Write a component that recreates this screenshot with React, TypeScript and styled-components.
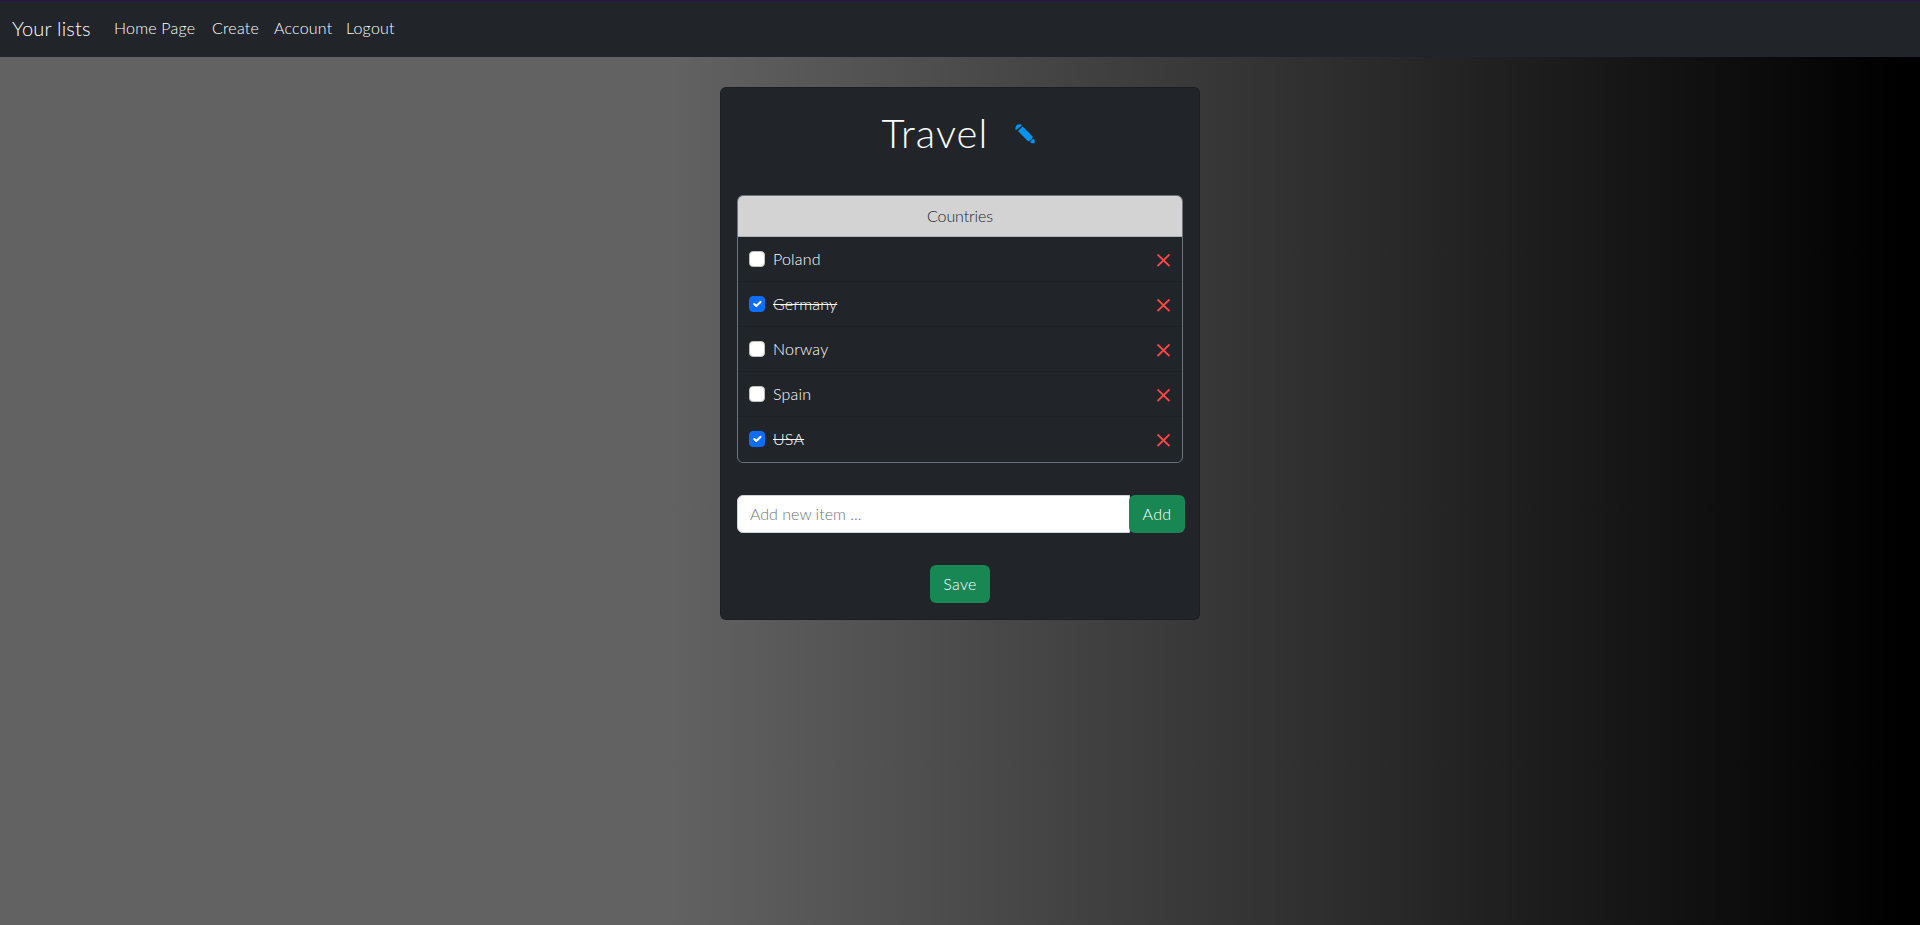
import React, { useState } from 'react';
import styled, { createGlobalStyle, css } from 'styled-components';

const GlobalStyle = createGlobalStyle`
  *, *::before, *::after { box-sizing: border-box; }
  body {
    margin: 0;
    font-family: Lato, sans-serif;
    font-size: 16px;
    font-weight: 300;
    line-height: 24px;
    letter-spacing: 0.2px;
    color: #fff;
  }
`;

const Page = styled.div`
  display: flex;
  flex-direction: column;
  min-height: 100vh;
  background: linear-gradient(to right, #626262 35%, #000 99%);
`;

const Navbar = styled.nav`
  display: flex;
  align-items: center;
  height: 57px;
  padding: 0 12px;
  border-top: 1px solid #2b1055;
  background: #212529;
`;

const Brand = styled.a`
  width: 78px;
  margin-right: 16px;
  padding-bottom: 2px;
  font-size: 20px;
  line-height: 30px;
  white-space: nowrap;
`;

const NavLink = styled.a<{ $width: number }>`
  width: ${(p) => p.$width + 16}px;
  padding: 7px 8px 9px;
  white-space: nowrap;
`;

const Card = styled.main`
  display: flex;
  flex-direction: column;
  align-items: center;
  width: 480px;
  margin: 30px auto 0;
  padding: 16px;
  border: 1px solid rgba(0, 0, 0, 0.175);
  border-radius: 6px;
  background: #212529;
`;

const TitleRow = styled.header`
  display: flex;
  align-items: center;
  height: 59px;
  gap: 27px;
`;

const Title = styled.h1`
  width: 106px;
  margin: 0 0 1px -4px;
  font-size: 40px;
  font-weight: 300;
  line-height: 48px;
  letter-spacing: 1.1px;
  white-space: nowrap;
`;

const IconButton = styled.button`
  display: flex;
  padding: 0;
  border: 0;
  background: none;
`;

const List = styled.section`
  width: 446px;
  margin-top: 32px;
  border: 1px solid #6c757d;
  border-radius: 6px;
  overflow: hidden;
`;

const ListHeader = styled.h2`
  height: 41px;
  margin: 0;
  padding: 8px;
  border-bottom: 1px solid #b1b4b6;
  background: #d3d3d3;
  color: #212529;
  font-size: 16px;
  font-weight: 300;
  letter-spacing: -0.1px;
  text-align: center;
`;

const Row = styled.div`
  display: flex;
  align-items: center;
  height: 45px;
  padding: 0 12px 0 11px;
  border-bottom: 1px solid #1d2125;
  ${IconButton} { padding-top: 2px; }
`;

const Check = styled.button<{ $on: boolean }>`
  display: flex;
  width: 16px;
  height: 16px;
  padding: 0;
  border: 1px solid ${(p) => (p.$on ? '#0d6efd' : '#bfbfbf')};
  border-radius: 4px;
  background: ${(p) => (p.$on ? '#0d6efd' : '#fff')};
`;

const ItemName = styled.span<{ $done: boolean }>`
  margin-left: 8px;
  margin-right: auto;
  ${(p) => p.$done && css`text-decoration: line-through;`}
`;

const AddRow = styled.form`
  display: flex;
  width: 448px;
  margin: 32px 0 0 2px;
`;

const Input = styled.input`
  flex: 1;
  min-width: 0;
  height: 38px;
  padding: 5px 12px 7px;
  border: 1px solid #ced4da;
  border-radius: 6px 0 0 6px;
  background: #fff;
  font: inherit;
  &::placeholder { color: #6c757d; opacity: 1; }
`;

const Button = styled.button<{ $width: number; $joined?: boolean }>`
  width: ${(p) => p.$width}px;
  height: 38px;
  padding: 0;
  margin-left: ${(p) => (p.$joined ? '-1px' : '0')};
  border: 0;
  border-radius: 6px;
  background: #198754;
  color: #fff;
  font: inherit;
  letter-spacing: 0.3px;
`;

const SaveArea = styled.div`
  margin-top: 32px;
`;

const links = [
  { label: 'Home Page', width: 82 },
  { label: 'Create', width: 46 },
  { label: 'Account', width: 56 },
  { label: 'Logout', width: 50 },
];

const Pencil = () => (
  <svg width="20" height="20" viewBox="0 0 20 20" fill="#0394f0">
    <path d="M.7 6.200C-.4 3.200 1.500.300 4.200.300c1.300 0 2.200.5 2.800 1.300z" />
    <path d="M3 7 7.600 2.500 17.600 12.600c0 2.600-1.800 4.600-4.600 4.700z" />
    <path d="M15 17.800 18.300 14.700 19.700 16v3.300h-3.300z" />
  </svg>
);

const Cross = () => (
  <svg width="13" height="13" viewBox="0 0 13 13" fill="none" stroke="#ff4747" strokeWidth="1.900">
    <path d="M.5.500 12.500 12M12.500.500.500 12" />
  </svg>
);

const Tick = () => (
  <svg width="14" height="14" viewBox="0 0 20 20" fill="none" stroke="#fff" strokeWidth="3" strokeLinecap="round" strokeLinejoin="round">
    <path d="m6 10 3 3 6-6" />
  </svg>
);

export default function App() {
  const [items, setItems] = useState([
    { name: 'Poland', done: false },
    { name: 'Germany', done: true },
    { name: 'Norway', done: false },
    { name: 'Spain', done: false },
    { name: 'USA', done: true },
  ]);
  const toggle = (name: string) =>
    setItems(items.map((i) => (i.name === name ? { ...i, done: !i.done } : i)));

  return (
    <Page>
      <GlobalStyle />
      <Navbar>
        <Brand>Your lists</Brand>
        {links.map((l) => (
          <NavLink key={l.label} $width={l.width}>{l.label}</NavLink>
        ))}
      </Navbar>
      <Card>
        <TitleRow>
          <Title>Travel</Title>
          <IconButton type="button"><Pencil /></IconButton>
        </TitleRow>
        <List>
          <ListHeader>Countries</ListHeader>
          {items.map((i) => (
            <Row key={i.name}>
              <Check type="button" $on={i.done} onClick={() => toggle(i.name)}>{i.done && <Tick />}</Check>
              <ItemName $done={i.done}>{i.name}</ItemName>
              <IconButton type="button" onClick={() => setItems(items.filter((o) => o !== i))}><Cross /></IconButton>
            </Row>
          ))}
        </List>
        <AddRow onSubmit={(e) => e.preventDefault()}>
          <Input placeholder="Add new item ..." />
          <Button type="submit" $width={56} $joined>Add</Button>
        </AddRow>
        <SaveArea>
          <Button type="button" $width={60}>Save</Button>
        </SaveArea>
      </Card>
    </Page>
  );
}
